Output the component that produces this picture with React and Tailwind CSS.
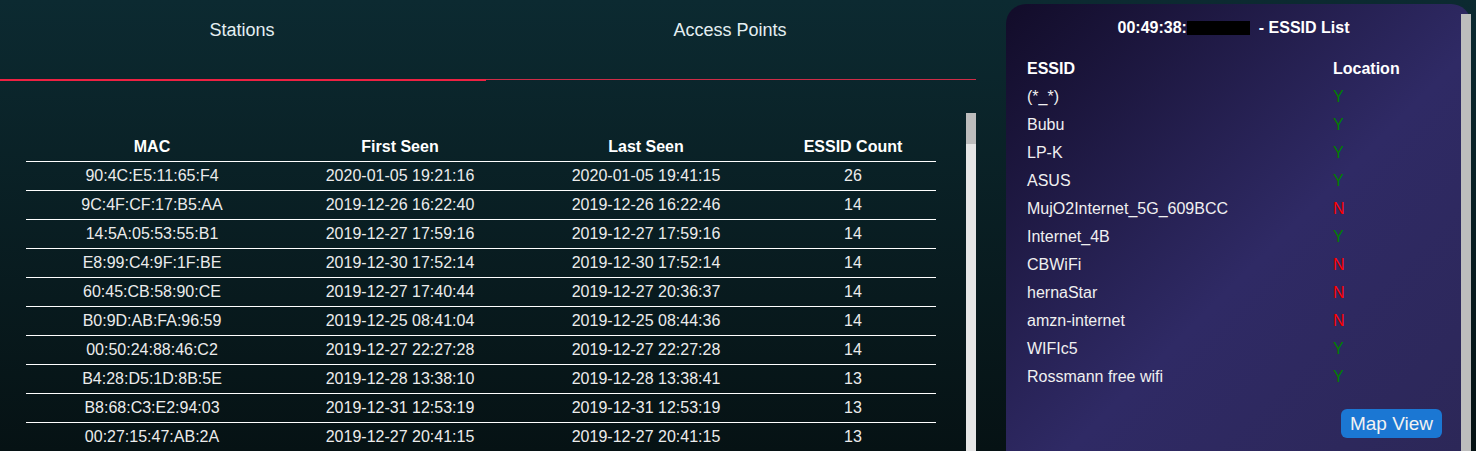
import React from "react";

const stations = [
  ["90:4C:E5:11:65:F4", "2020-01-05 19:21:16", "2020-01-05 19:41:15", "26"],
  ["9C:4F:CF:17:B5:AA", "2019-12-26 16:22:40", "2019-12-26 16:22:46", "14"],
  ["14:5A:05:53:55:B1", "2019-12-27 17:59:16", "2019-12-27 17:59:16", "14"],
  ["E8:99:C4:9F:1F:BE", "2019-12-30 17:52:14", "2019-12-30 17:52:14", "14"],
  ["60:45:CB:58:90:CE", "2019-12-27 17:40:44", "2019-12-27 20:36:37", "14"],
  ["B0:9D:AB:FA:96:59", "2019-12-25 08:41:04", "2019-12-25 08:44:36", "14"],
  ["00:50:24:88:46:C2", "2019-12-27 22:27:28", "2019-12-27 22:27:28", "14"],
  ["B4:28:D5:1D:8B:5E", "2019-12-28 13:38:10", "2019-12-28 13:38:41", "13"],
  ["B8:68:C3:E2:94:03", "2019-12-31 12:53:19", "2019-12-31 12:53:19", "13"],
  ["00:27:15:47:AB:2A", "2019-12-27 20:41:15", "2019-12-27 20:41:15", "13"],
];

const essids = [
  ["(*_*)", "Y"],
  ["Bubu", "Y"],
  ["LP-K", "Y"],
  ["ASUS", "Y"],
  ["MujO2Internet_5G_609BCC", "N"],
  ["Internet_4B", "Y"],
  ["CBWiFi", "N"],
  ["hernaStar", "N"],
  ["amzn-internet", "N"],
  ["WIFIc5", "Y"],
  ["Rossmann free wifi", "Y"],
];

export default function App() {
  return (
    <div className="w-[1476px] h-[451px] overflow-hidden flex bg-[linear-gradient(to_bottom,#0c2a31,#061214)] font-['Liberation_Sans',Arial,sans-serif] text-[16px]">
      {/* Left column */}
      <div className="w-[976px] flex flex-col shrink-0">
        <div className="flex h-[79px] text-[18px] text-[#e4eff2]">
          <div className="w-[484px] flex justify-center pt-[17px] leading-[27px]">Stations</div>
          <div className="flex-1 flex justify-center pt-[17px] leading-[27px]">Access Points</div>
        </div>
        <div className="flex h-[2px] items-start">
          <div className="w-[486px] h-[2px] bg-[#ee2142]"></div>
          <div className="flex-1 h-[1px] bg-[#cf2c47]"></div>
        </div>
        <div className="flex flex-1 mt-[32px] min-h-0">
          <div className="flex-1 pl-[26px] pr-[30px] pt-[20px] text-[#ececec]">
            <div className="grid grid-cols-[252px_244px_248px_166px] h-[29px] border-b border-white items-center text-center font-bold text-white">
              <div>MAC</div>
              <div>First Seen</div>
              <div>Last Seen</div>
              <div>ESSID Count</div>
            </div>
            {stations.map((r, i) => (
              <div
                key={i}
                className="grid grid-cols-[252px_244px_248px_166px] h-[29px] border-b border-white items-center text-center"
              >
                {r.map((c, j) => (
                  <div key={j}>{c}</div>
                ))}
              </div>
            ))}
          </div>
          <div className="w-[10px] bg-[#e6e6e6]">
            <div className="h-[31px] bg-[#bdbdbd]"></div>
          </div>
        </div>
      </div>

      {/* Right panel */}
      <div className="ml-[30px] mt-[4px] w-[465px] h-[460px] rounded-t-[20px] flex bg-[linear-gradient(135deg,#120c29_0%,#2f2a65_55%,#2c2757_100%)]">
        <div className="flex-1 flex flex-col">
          <div className="pt-[14px] leading-[20px] font-bold text-white text-center flex justify-center items-center">
            <span>00:49:38:</span>
            <span className="inline-block w-[63px] h-[14px] bg-black"></span>
            <span>&nbsp;&nbsp;- ESSID List</span>
          </div>
          <div className="mt-[17px] pl-[21px] grid grid-cols-[306px_1fr] leading-[28px]">
            <div className="font-bold text-white">ESSID</div>
            <div className="font-bold text-white">Location</div>
            {essids.map(([name, loc], i) => (
              <React.Fragment key={i}>
                <div className="text-[#f0f0f0]">{name}</div>
                <div className={loc === "Y" ? "text-[#008000]" : "text-[#ff0000]"}>{loc}</div>
              </React.Fragment>
            ))}
          </div>
          <div className="flex justify-end pr-[19px] mt-[18px]">
            <div className="h-[29px] px-[9px] rounded-[6px] bg-[#1b77d3] text-[#f2f2f2] text-[19px] leading-[29px]">
              Map View
            </div>
          </div>
        </div>
        <div className="w-[10px] mt-[10px] bg-[#bdbdbd]"></div>
      </div>
    </div>
  );
}
